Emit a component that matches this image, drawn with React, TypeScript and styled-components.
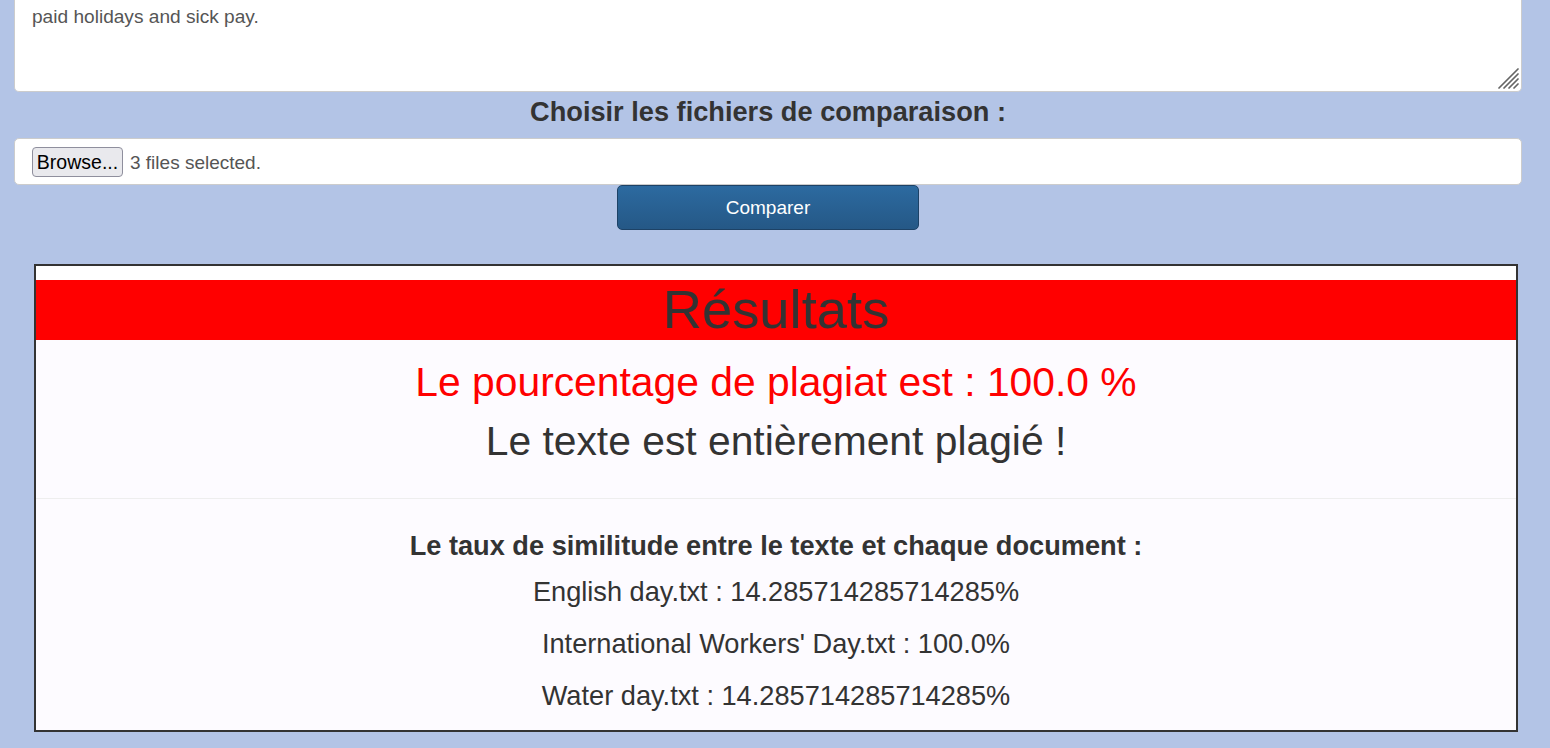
import React from "react";
import styled, { createGlobalStyle } from "styled-components";

const Global = createGlobalStyle`
  html, body { margin: 0; padding: 0; }
  body {
    background: #b3c4e6;
    font-family: "Liberation Sans", Arial, sans-serif;
    color: #333;
    overflow: hidden;
  }
`;

const Page = styled.div`
  display: flex;
  flex-direction: column;
  width: 1550px;
  height: 748px;
`;

const Form = styled.form`
  display: flex;
  flex-direction: column;
  align-items: center;
  margin-left: 14px;
  width: 1508px;
`;

const TextWrap = styled.div`
  position: relative;
  width: 100%;
`;

const TextArea = styled.textarea`
  box-sizing: border-box;
  width: 100%;
  height: 92px;
  margin: 0;
  padding: 3px 17px 0;
  border: 1px solid #ccc;
  border-top: none;
  border-radius: 0 0 5px 5px;
  background: #fff;
  color: #555;
  font-family: "Liberation Sans", Arial, sans-serif;
  font-size: 19.1px;
  line-height: 27px;
  outline: none;
  resize: none;
  display: block;
`;

const Grip = styled.svg`
  position: absolute;
  right: 3px;
  bottom: 3px;
  width: 21px;
  height: 21px;
  pointer-events: none;
`;

const Label = styled.label`
  display: block;
  margin: 5px 0 11px;
  font-size: 27.2px;
  line-height: 30px;
  font-weight: bold;
  color: #333;
`;

const FileBox = styled.div`
  box-sizing: border-box;
  width: 100%;
  height: 47px;
  display: flex;
  align-items: center;
  gap: 7px;
  padding: 1px 17px 0;
  background: #fff;
  border: 1px solid #ccc;
  border-radius: 5px;
`;

const BrowseButton = styled.button`
  box-sizing: border-box;
  width: 91px;
  height: 30px;
  padding: 2px 0 0;
  border: 1px solid #8f8f9d;
  border-radius: 4px;
  background: #e9e9ed;
  color: #000;
  font-family: "Liberation Sans", Arial, sans-serif;
  font-size: 19.5px;
  line-height: 1;
`;

const FileText = styled.span`
  color: #555;
  font-size: 19px;
  padding-top: 2px;
`;

const SubmitButton = styled.button`
  box-sizing: border-box;
  width: 302px;
  height: 45px;
  padding-top: 2px;
  border: 1px solid #1d4266;
  border-radius: 5px;
  background: linear-gradient(to bottom, #2c6aa0 0%, #255886 100%);
  color: #fff;
  font-family: "Liberation Sans", Arial, sans-serif;
  font-size: 19px;
`;

const Results = styled.section`
  box-sizing: border-box;
  margin: 34px 0 0 34px;
  width: 1484px;
  height: 468px;
  border: 2px solid #333;
  background: #fdfbff;
  display: flex;
  flex-direction: column;
  align-items: stretch;
  text-align: center;
`;

const TopStrip = styled.div`
  height: 14px;
  background: #fff;
`;

const Title = styled.h1`
  margin: 0;
  height: 60px;
  background: #ff0000;
  color: #333;
  font-weight: normal;
  font-size: 54.4px;
  line-height: 60px;
`;

const Verdict = styled.p<{ $red?: boolean }>`
  margin: ${(p) => (p.$red ? "18px 0 0" : "11px 0 0")};
  font-size: 40.8px;
  line-height: 48px;
  color: ${(p) => (p.$red ? "#ff0000" : "#333")};
`;

const Divider = styled.hr`
  width: 100%;
  margin: 33px 0 0;
  border: 0;
  border-top: 1px solid #eee;
`;

const SubTitle = styled.h3`
  margin: 31px 0 0;
  font-size: 27.2px;
  line-height: 32px;
  font-weight: bold;
  color: #333;
`;

const Rows = styled.div`
  display: flex;
  flex-direction: column;
  gap: 20px;
  margin-top: 14px;
`;

const Row = styled.p`
  margin: 0;
  font-size: 27.2px;
  line-height: 32px;
  color: #333;
`;

const rows = [
  "English day.txt : 14.285714285714285%",
  "International Workers' Day.txt : 100.0%",
  "Water day.txt : 14.285714285714285%",
];

export default function App() {
  return (
    <Page>
      <Global />
      <Form onSubmit={(e) => e.preventDefault()}>
        <TextWrap>
          <TextArea readOnly value="paid holidays and sick pay." />
          <Grip viewBox="0 0 21 21">
            <g stroke="#666" strokeWidth="1.7" strokeLinecap="round">
              <line x1="1" y1="20" x2="20" y2="1" />
              <line x1="6" y1="20" x2="20" y2="6" />
              <line x1="11" y1="20" x2="20" y2="11" />
              <line x1="16" y1="20" x2="20" y2="16" />
            </g>
          </Grip>
        </TextWrap>
        <Label>Choisir les fichiers de comparaison :</Label>
        <FileBox>
          <BrowseButton type="button">Browse...</BrowseButton>
          <FileText>3 files selected.</FileText>
        </FileBox>
        <SubmitButton type="submit">Comparer</SubmitButton>
      </Form>
      <Results>
        <TopStrip />
        <Title>Résultats</Title>
        <Verdict $red>Le pourcentage de plagiat est : 100.0 %</Verdict>
        <Verdict>Le texte est entièrement plagié !</Verdict>
        <Divider />
        <SubTitle>Le taux de similitude entre le texte et chaque document :</SubTitle>
        <Rows>
          {rows.map((r) => (
            <Row key={r}>{r}</Row>
          ))}
        </Rows>
      </Results>
    </Page>
  );
}
